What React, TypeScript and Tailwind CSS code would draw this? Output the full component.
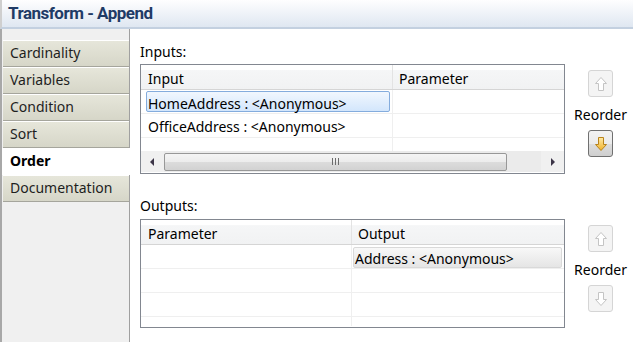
import React from "react";

function UpArrow({ enabled }: { enabled: boolean }) {
  return (
    <svg width="14" height="16" viewBox="0 0 14 16">
      <defs>
        <linearGradient id="gu" x1="0" y1="0" x2="0" y2="1">
          <stop offset="0" stopColor="#ffe9a0" />
          <stop offset="1" stopColor="#f2b62e" />
        </linearGradient>
      </defs>
      <path
        d="M7 1.5 L12.5 7.5 L9.5 7.5 L9.5 14.5 L4.5 14.5 L4.5 7.5 L1.5 7.5 Z"
        fill={enabled ? "url(#gu)" : "#ffffff"}
        stroke={enabled ? "#b8831c" : "#c4c4c4"}
        strokeWidth="1"
        strokeLinejoin="round"
      />
    </svg>
  );
}

function DownArrow({ enabled }: { enabled: boolean }) {
  return (
    <svg width="14" height="16" viewBox="0 0 14 16">
      <defs>
        <linearGradient id="gd" x1="0" y1="0" x2="0" y2="1">
          <stop offset="0" stopColor="#ffeaa6" />
          <stop offset="1" stopColor="#f0b22a" />
        </linearGradient>
      </defs>
      <path
        d="M4.5 1.5 L9.5 1.5 L9.5 8.5 L12.5 8.5 L7 14.5 L1.5 8.5 L4.5 8.5 Z"
        fill={enabled ? "url(#gd)" : "#ffffff"}
        stroke={enabled ? "#b8831c" : "#c4c4c4"}
        strokeWidth="1"
        strokeLinejoin="round"
      />
    </svg>
  );
}

function Btn({ enabled, children }: { enabled: boolean; children: React.ReactNode }) {
  return (
    <div
      className={
        enabled
          ? "w-[25px] h-[27px] flex items-center justify-center rounded-[3px] border border-[#707070] bg-[linear-gradient(#f2f2f2_0%,#ebebeb_50%,#dddddd_51%,#cfcfcf_100%)]"
          : "w-[25px] h-[27px] flex items-center justify-center rounded-[3px] border border-[#d5d5d5] bg-[#f4f4f4]"
      }
    >
      {children}
    </div>
  );
}

function Reorder({ downEnabled }: { downEnabled: boolean }) {
  return (
    <div className="w-[68px] flex flex-col items-center pl-[3px]">
      <div className="mt-[6px]">
        <Btn enabled={false}>
          <UpArrow enabled={false} />
        </Btn>
      </div>
      <div className="mt-[8px] h-[20px] leading-[20px] text-[14px] text-black">Reorder</div>
      <div className="mt-[5px]">
        <Btn enabled={downEnabled}>
          <DownArrow enabled={downEnabled} />
        </Btn>
      </div>
    </div>
  );
}

const headerBg = "bg-[linear-gradient(#ffffff_0%,#ffffff_22%,#f5f6f7_23%,#f1f2f3_100%)]";

function InputsTable() {
  return (
    <div className="w-[425px] h-[110px] border border-[#828790] bg-white flex flex-col overflow-hidden">
      <div className={`h-[25px] flex border-b border-[#d5d5d5] ${headerBg}`}>
        <div className="w-[252px] border-r border-[#e3e3e3] pl-[7px] pt-[3px] leading-[21px] text-[14px]">Input</div>
        <div className="flex-1 pl-[6px] pt-[3px] leading-[21px] text-[14px]">Parameter</div>
      </div>
      <div className="h-[24px] flex border-b border-[#efefef]">
        <div className="w-[252px] border-r border-[#efefef] pl-[5px] pr-[2px] py-[1px]">
          <div className="h-full rounded-[2px] border border-[#84acdd] bg-[linear-gradient(#f1f7fe,#d3e6fc)] pl-[1px] pt-[2px] leading-[19px] text-[14px]">
            HomeAddress : &lt;Anonymous&gt;
          </div>
        </div>
        <div className="flex-1" />
      </div>
      <div className="h-[24px] flex border-b border-[#efefef]">
        <div className="w-[252px] border-r border-[#efefef] pl-[7px] pt-[3px] leading-[20px] text-[14px]">
          OfficeAddress : &lt;Anonymous&gt;
        </div>
        <div className="flex-1" />
      </div>
      <div className="h-[13px] flex">
        <div className="w-[252px] border-r border-[#efefef]" />
        <div className="flex-1" />
      </div>
      <div className="h-[21px] flex items-center bg-[#ebebeb]">
        <div className="w-[23px] h-full flex items-center justify-center bg-[#f0f0f0]">
          <svg width="5" height="8" viewBox="0 0 5 8">
            <path d="M4 0 L0 4 L4 8 Z" fill="#3c3548" />
          </svg>
        </div>
        <div className="w-[343px] h-[18px] rounded-[2px] border border-[#989898] bg-[linear-gradient(#f5f5f5_0%,#ececec_50%,#dcdcdc_51%,#d2d2d2_100%)] flex items-center justify-center">
          <div className="flex gap-[2px]">
            <div className="w-[1px] h-[7px] bg-[#6c6c6c]" />
            <div className="w-[1px] h-[7px] bg-[#6c6c6c]" />
            <div className="w-[1px] h-[7px] bg-[#6c6c6c]" />
          </div>
        </div>
        <div className="flex-1" />
        <div className="w-[23px] h-full flex items-center justify-center bg-[#f0f0f0]">
          <svg width="5" height="8" viewBox="0 0 5 8">
            <path d="M1 0 L5 4 L1 8 Z" fill="#3c3548" />
          </svg>
        </div>
      </div>
    </div>
  );
}

function OutputsTable() {
  return (
    <div className="w-[425px] h-[109px] border border-[#828790] bg-white flex flex-col overflow-hidden">
      <div className={`h-[25px] flex border-b border-[#d5d5d5] ${headerBg}`}>
        <div className="w-[211px] border-r border-[#e3e3e3] pl-[7px] pt-[3px] leading-[21px] text-[14px]">Parameter</div>
        <div className="flex-1 pl-[6px] pt-[3px] leading-[21px] text-[14px]">Output</div>
      </div>
      <div className="h-[24px] flex border-b border-[#efefef]">
        <div className="w-[211px] border-r border-[#efefef]" />
        <div className="flex-1 pl-[1px] pr-[2px] pt-[2px]">
          <div className="h-full rounded-[2px] border border-[#d9d9d9] bg-[linear-gradient(#f8f8f8,#e5e5e5)] pl-[1px] pt-[2px] leading-[18px] text-[14px]">
            Address : &lt;Anonymous&gt;
          </div>
        </div>
      </div>
      <div className="h-[24px] flex border-b border-[#efefef]">
        <div className="w-[211px] border-r border-[#efefef]" />
        <div className="flex-1" />
      </div>
      <div className="h-[24px] flex border-b border-[#efefef]">
        <div className="w-[211px] border-r border-[#efefef]" />
        <div className="flex-1" />
      </div>
      <div className="h-[9px] flex">
        <div className="w-[211px] border-r border-[#efefef]" />
        <div className="flex-1" />
      </div>
    </div>
  );
}

const tabs = ["Cardinality", "Variables", "Condition", "Sort", "Order", "Documentation"];

export default function App() {
  return (
    <div className="w-[633px] h-[342px] flex flex-col bg-white overflow-hidden font-['Noto_Sans',sans-serif] text-black">
      <div className="h-[29px] shrink-0 border-l-2 border-l-[#cfcfcf] border-b-2 border-b-[#c3d0e0] bg-[linear-gradient(#fefeff,#dfe7f1)] pl-[6px] flex items-center">
        <span className="text-[17px] font-bold tracking-[-0.5px] text-[#1f3b66] font-['Liberation_Sans_Narrow','Roboto',sans-serif] leading-none pb-[1px]">
          Transform - Append
        </span>
      </div>
      <div className="flex flex-1 min-h-0">
        <div className="w-[130px] shrink-0 bg-[#f0f0f0] border-l-2 border-l-[#a8a8a8] border-r border-r-[#a0a0a0] pt-[11px] flex flex-col">
          {tabs.map((t) =>
            t === "Order" ? (
              <div key={t} className="h-[27px] bg-white -mr-[1px] pl-[8px] leading-[26px] text-[14px] font-bold text-black">
                {t}
              </div>
            ) : (
              <div
                key={t}
                className="h-[27px] ml-[1px] border-t border-t-white border-b border-b-[#a5a59c] bg-[linear-gradient(#e6e6da,#d6d6c8)] pl-[7px] leading-[24px] text-[14px] text-[#1e1e1e]"
              >
                {t}
              </div>
            )
          )}
        </div>
        <div className="flex-1 pl-[10px] pt-[13px] flex flex-col">
          <div className="h-[20px] leading-[20px] text-[14px]">Inputs:</div>
          <div className="mt-[2px] flex">
            <InputsTable />
            <Reorder downEnabled={true} />
          </div>
          <div className="mt-[22px] h-[20px] leading-[20px] text-[14px]">Outputs:</div>
          <div className="mt-[3px] flex">
            <OutputsTable />
            <Reorder downEnabled={false} />
          </div>
        </div>
      </div>
    </div>
  );
}
